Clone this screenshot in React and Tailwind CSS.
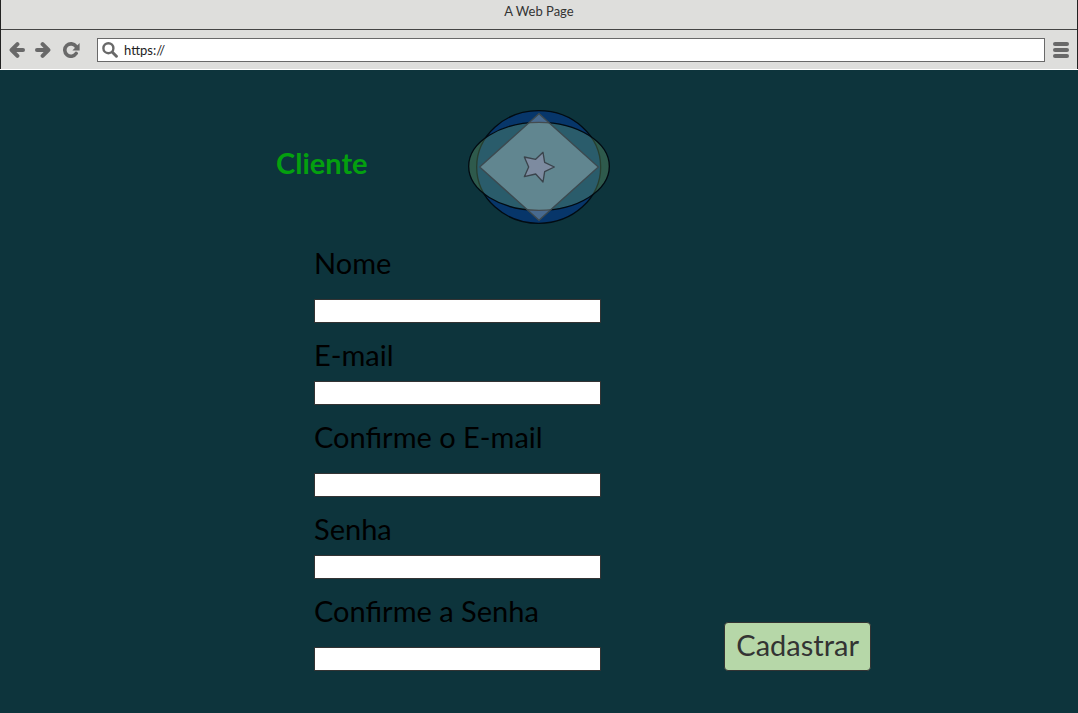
import React from 'react';

function BackIcon() {
  return (
    <svg className="h-4 w-4" viewBox="0 0 16 16" fill="none" stroke="#696969" strokeWidth="4" strokeLinecap="round" strokeLinejoin="round" aria-hidden="true">
      <path d="M4 8h10" />
      <path d="M8.4 2.2 2.6 8l5.8 5.8" />
    </svg>
  );
}

function ForwardIcon() {
  return (
    <svg className="h-4 w-4" viewBox="0 0 16 16" fill="none" stroke="#696969" strokeWidth="4" strokeLinecap="round" strokeLinejoin="round" aria-hidden="true">
      <path d="M2 8h10" />
      <path d="M7.6 2.2 13.4 8l-5.8 5.8" />
    </svg>
  );
}

function ReloadIcon() {
  return (
    <svg className="h-4 w-[18px]" viewBox="0 0 18 16" aria-hidden="true">
      <path d="M13 4.4A6.2 6.2 0 1 0 13.2 11.4" fill="none" stroke="#696969" strokeWidth="3.6" strokeLinecap="round" />
      <path d="M16.6 1v7.6H9.4z" fill="#696969" />
    </svg>
  );
}

function SearchIcon() {
  return (
    <svg className="h-4 w-4" viewBox="0 0 16 16" fill="none" stroke="#696969" aria-hidden="true">
      <circle cx="6.4" cy="6.2" r="5" strokeWidth="2.4" />
      <path d="m10.4 10.2 4 4" strokeWidth="3" strokeLinecap="round" />
    </svg>
  );
}

function MenuIcon() {
  return (
    <svg className="h-4 w-4" viewBox="0 0 16 16" fill="#696969" aria-hidden="true">
      <rect width="16" height="4" rx="2" />
      <rect y="6" width="16" height="4" rx="2" />
      <rect y="12" width="16" height="4" rx="2" />
    </svg>
  );
}

function Logo() {
  return (
    <svg className="h-[116px] w-36" viewBox="21 27 432 348" strokeWidth="4" role="img" aria-label="Logo">
      <ellipse cx="236" cy="201" rx="186" ry="169" fill="#07366a" stroke="#020b12" />
      <ellipse cx="237" cy="199" rx="211" ry="132" fill="#74aa6e" fillOpacity=".33" stroke="#020b12" />
      <path d="M59 201 237 41l178 160-178 160z" fill="#f6f7f3" fillOpacity=".27" stroke="#3c4a50" />
      <path
        d="m283 201-29 14-5 31-22-24-34 8 13-29-13-30 34 7 22-21 5 30z"
        fill="#7d8ba0"
        stroke="#3a444c"
        strokeLinejoin="round"
      />
    </svg>
  );
}

const fields = [
  { id: 'nome', label: 'Nome', type: 'text', gap: 'gap-[19px]' },
  { id: 'email', label: 'E-mail', type: 'email', gap: 'gap-[9px]' },
  { id: 'email-confirm', label: 'Confirme o E-mail', type: 'email', gap: 'gap-[19px]' },
  { id: 'senha', label: 'Senha', type: 'password', gap: 'gap-[9px]' },
  { id: 'senha-confirm', label: 'Confirme a Senha', type: 'password', gap: 'gap-[19px]' },
];

function Field({ id, label, type, gap }) {
  return (
    <div className={`flex flex-col ${gap}`}>
      <label htmlFor={id} className="text-[29px] leading-[34px] text-black">{label}</label>
      <input id={id} type={type} className="h-6 w-full border border-[#333333] bg-white px-1 text-sm" />
    </div>
  );
}

export default function App() {
  return (
    <div className="flex min-h-screen flex-col bg-[#0d343c] font-['Lato','Noto_Sans',sans-serif]">
      <header className="border-b border-white bg-[#dededc]">
        <div className="border-x border-[#222222]">
          <div className="flex h-[30px] justify-center border-b border-[#444444] pt-[2px] text-[13px] leading-[18px] text-[#333333]">
            A Web Page
          </div>
          <div className="flex h-[39px] items-center px-2">
            <nav className="flex items-center gap-3">
              <div className="flex items-center gap-[10px]">
                <button type="button" aria-label="Voltar"><BackIcon /></button>
                <button type="button" aria-label="Avançar"><ForwardIcon /></button>
              </div>
              <button type="button" aria-label="Recarregar"><ReloadIcon /></button>
            </nav>
            <div className="ml-4 flex h-6 flex-1 items-center gap-[6px] border border-[#696969] bg-white px-1">
              <SearchIcon />
              <input
                type="text"
                aria-label="Endereço"
                defaultValue="https://"
                className="min-w-0 flex-1 bg-transparent text-[13px] leading-[18px] text-[#222222] outline-none"
              />
            </div>
            <button type="button" aria-label="Menu" className="ml-2"><MenuIcon /></button>
          </div>
        </div>
      </header>

      <main className="mx-auto w-full max-w-[664px] pt-[39px] pb-10">
        <div className="grid grid-cols-[1fr_auto_1fr] items-center">
          <h1 className="pb-2 pl-[69px] text-[29px] leading-[34px] font-bold text-[#04a00f]">Cliente</h1>
          <Logo />
        </div>
        <form className="mt-[21px] flex items-end justify-between pl-[107px]" onSubmit={(e) => e.preventDefault()}>
          <div className="flex w-[287px] flex-col gap-[15px]">
            {fields.map((field) => (
              <Field key={field.id} {...field} />
            ))}
          </div>
          <button
            type="submit"
            className="rounded-sm border border-[#333333] bg-[#b6d7a8] px-[11px] pt-[5px] pb-2 text-[29px] leading-[34px] text-[#333333]"
          >
            Cadastrar
          </button>
        </form>
      </main>
    </div>
  );
}
